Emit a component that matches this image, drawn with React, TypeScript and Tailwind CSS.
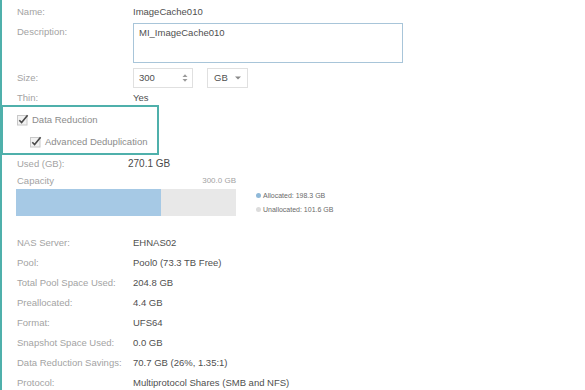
import React from "react";

const Check = () => (
  <svg width="12" height="12" viewBox="0 0 12 12" className="shrink-0">
    <rect x="0.5" y="1.5" width="9.5" height="9.5" fill="#f2f2f2" stroke="#c8c8c8" />
    <path d="M2.3 6.2 L4.6 8.6 L10.6 1.2" fill="none" stroke="#4a4a4a" strokeWidth="1.6" />
  </svg>
);

const Row = ({ label, value }: { label: string; value: string }) => (
  <div className="flex h-[20px] items-center pl-[15px]">
    <div className="w-[116px] text-[#a3a3a3]">{label}</div>
    <div className="text-[#4f4f4f]">{value}</div>
  </div>
);

export default function App() {
  return (
    <div
      className="relative h-[390px] w-[585px] overflow-hidden border-l-[2px] border-[#4fb0ab] bg-white text-[9.5px] leading-[12px]"
      style={{ fontFamily: '"Liberation Sans", Arial, sans-serif' }}
    >
      <div className="mt-[1px] flex h-[22px] items-center pl-[15px]">
        <div className="w-[116px] text-[#a3a3a3]">Name:</div>
        <div className="text-[#4f4f4f]">ImageCache010</div>
      </div>
      <div className="flex items-start pl-[15px]">
        <div className="w-[116px] pt-[3px] text-[#a3a3a3]">Description:</div>
        <div className="h-[40px] w-[270px] border border-[#a8c5d9] px-[5px] pt-[3px] text-[#4f4f4f]">
          MI_ImageCache010
        </div>
      </div>
      <div className="mt-[5px] flex h-[20px] items-center pl-[15px]">
        <div className="w-[116px] text-[#a3a3a3]">Size:</div>
        <div className="flex h-[20px] w-[60px] items-center justify-between border border-[#e0e0e0] pl-[5px] pr-[4px] text-[#4f4f4f]">
          <span>300</span>
          <svg width="6" height="10" viewBox="0 0 6 10">
            <path d="M0.5 4 L3 1.2 L5.5 4 Z" fill="#9a9a9a" />
            <path d="M0.5 6 L3 8.8 L5.5 6 Z" fill="#9a9a9a" />
          </svg>
        </div>
        <div className="ml-[14px] flex h-[20px] w-[41px] items-center justify-between border border-[#e0e0e0] pl-[6px] pr-[6px] text-[#4f4f4f]">
          <span>GB</span>
          <svg width="6" height="4" viewBox="0 0 6 4">
            <path d="M0 0.5 L6 0.5 L3 3.5 Z" fill="#8a8a8a" />
          </svg>
        </div>
      </div>
      <div className="mt-[3px] flex h-[14px] items-center pl-[15px]">
        <div className="w-[116px] text-[#a3a3a3]">Thin:</div>
        <div className="text-[#4f4f4f]">Yes</div>
      </div>
      <div className="ml-[-1px] h-[50px] w-[158px] border-[2px] border-[#4fb0ab] pt-[2px]">
        <div className="flex h-[22px] items-center gap-[3px] pl-[14px] text-[#8c8c8c]">
          <Check />
          <span>Data Reduction</span>
        </div>
        <div className="flex h-[22px] items-center gap-[3px] pl-[27px] text-[#8c8c8c]">
          <Check />
          <span>Advanced Deduplication</span>
        </div>
      </div>
      <div className="flex h-[18px] items-center pl-[15px]">
        <div className="w-[111px] text-[#a3a3a3]">Used (GB):</div>
        <div className="text-[10px] text-[#4a4a4a]">270.1 GB</div>
      </div>
      <div className="flex items-end pl-[14px]">
        <div className="w-[220px]">
          <div className="flex h-[16px] items-center justify-between">
            <span className="pl-[1px] text-[#a3a3a3]">Capacity</span>
            <span className="text-[8px] text-[#a3a3a3]">300.0 GB</span>
          </div>
          <div className="flex h-[27px] bg-[#e8e8e8]">
            <div className="h-full bg-[#a6c9e5]" style={{ width: `${(198.3 / 300) * 100}%` }} />
          </div>
        </div>
        <div className="ml-[20px] flex h-[27px] flex-col justify-center gap-[3px] text-[7px] leading-[11px] text-[#6a6a6a]">
          <div className="flex items-center gap-[2px]">
            <span className="inline-block h-[5px] w-[5px] rounded-full bg-[#8fb9d9]" />
            <span>Allocated: 198.3 GB</span>
          </div>
          <div className="flex items-center gap-[2px]">
            <span className="inline-block h-[5px] w-[5px] rounded-full bg-[#dcdcdc]" />
            <span>Unallocated: 101.6 GB</span>
          </div>
        </div>
      </div>
      <div className="mt-[17px]">
        <Row label="NAS Server:" value="EHNAS02" />
        <Row label="Pool:" value="Pool0 (73.3 TB Free)" />
        <Row label="Total Pool Space Used:" value="204.8 GB" />
        <Row label="Preallocated:" value="4.4 GB" />
        <Row label="Format:" value="UFS64" />
        <Row label="Snapshot Space Used:" value="0.0 GB" />
        <Row label="Data Reduction Savings:" value="70.7 GB (26%, 1.35:1)" />
        <Row label="Protocol:" value="Multiprotocol Shares (SMB and NFS)" />
      </div>
    </div>
  );
}
